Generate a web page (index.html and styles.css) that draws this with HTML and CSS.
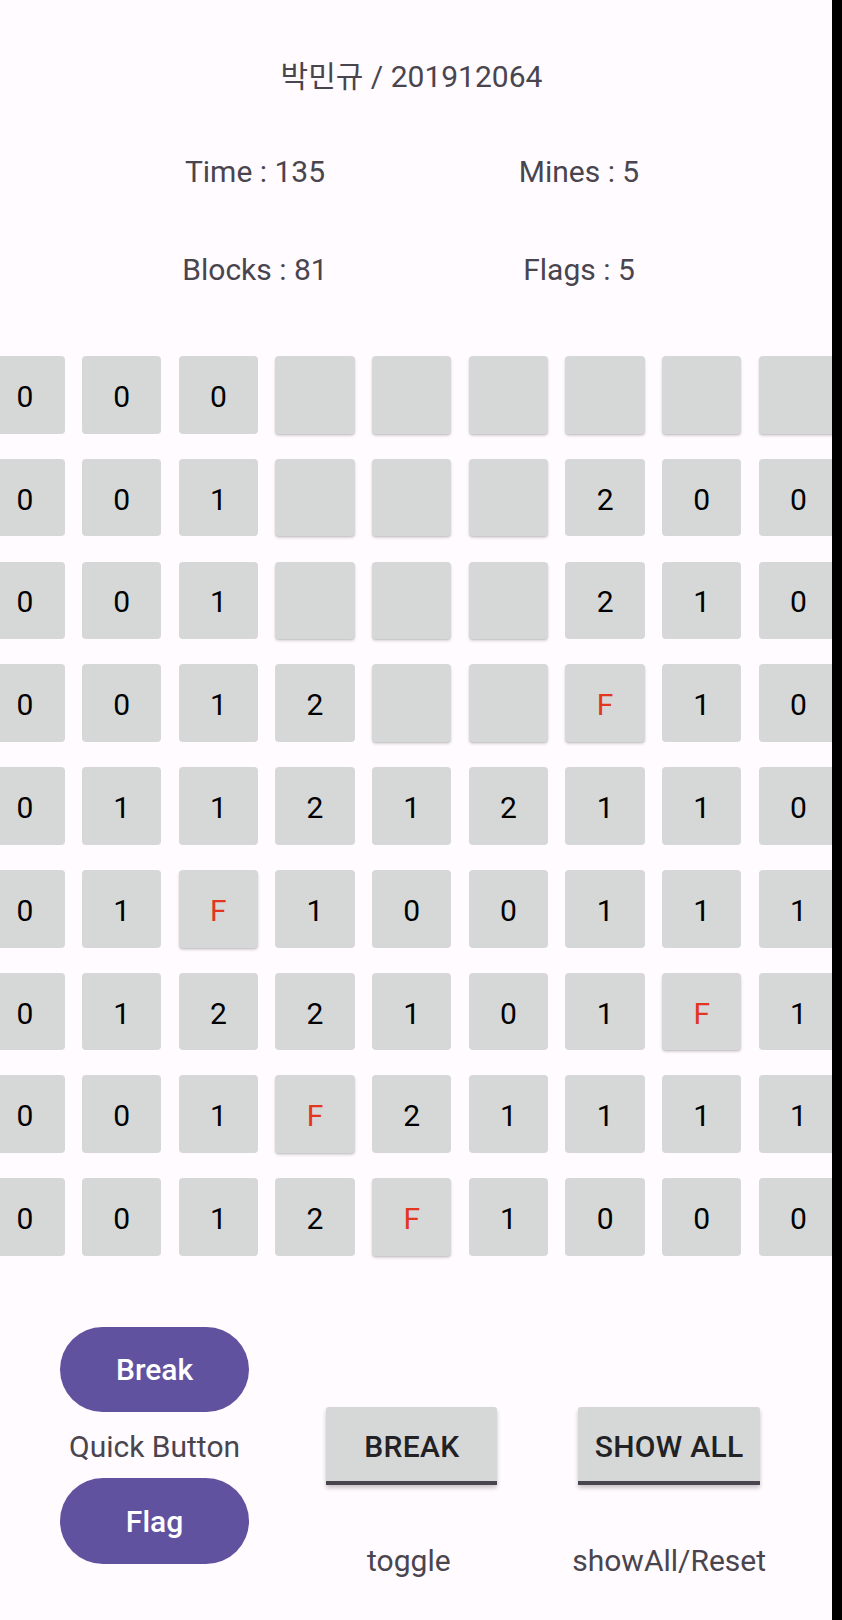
FILE: index.html
```html
<!DOCTYPE html>
<html lang="ko">
<head>
<meta charset="utf-8">
<title>Minesweeper</title>
<link rel="stylesheet" href="styles.css">
</head>
<body>
<div class="screen">
  <div class="title">박민규 / 201912064</div>

  <div class="stats">
    <div class="stat">Time : 135</div>
    <div class="stat">Mines : 5</div>
    <div class="stat">Blocks : 81</div>
    <div class="stat">Flags : 5</div>
  </div>

  <div class="board">
    <div class="tile">0</div><div class="tile">0</div><div class="tile">0</div><div class="tile closed"></div><div class="tile closed"></div><div class="tile closed"></div><div class="tile closed"></div><div class="tile closed"></div><div class="tile closed"></div>
    <div class="tile">0</div><div class="tile">0</div><div class="tile">1</div><div class="tile closed"></div><div class="tile closed"></div><div class="tile closed"></div><div class="tile">2</div><div class="tile">0</div><div class="tile">0</div>
    <div class="tile">0</div><div class="tile">0</div><div class="tile">1</div><div class="tile closed"></div><div class="tile closed"></div><div class="tile closed"></div><div class="tile">2</div><div class="tile">1</div><div class="tile">0</div>
    <div class="tile">0</div><div class="tile">0</div><div class="tile">1</div><div class="tile">2</div><div class="tile closed"></div><div class="tile closed"></div><div class="tile closed flag">F</div><div class="tile">1</div><div class="tile">0</div>
    <div class="tile">0</div><div class="tile">1</div><div class="tile">1</div><div class="tile">2</div><div class="tile">1</div><div class="tile">2</div><div class="tile">1</div><div class="tile">1</div><div class="tile">0</div>
    <div class="tile">0</div><div class="tile">1</div><div class="tile closed flag">F</div><div class="tile">1</div><div class="tile">0</div><div class="tile">0</div><div class="tile">1</div><div class="tile">1</div><div class="tile">1</div>
    <div class="tile">0</div><div class="tile">1</div><div class="tile">2</div><div class="tile">2</div><div class="tile">1</div><div class="tile">0</div><div class="tile">1</div><div class="tile closed flag">F</div><div class="tile">1</div>
    <div class="tile">0</div><div class="tile">0</div><div class="tile">1</div><div class="tile closed flag">F</div><div class="tile">2</div><div class="tile">1</div><div class="tile">1</div><div class="tile">1</div><div class="tile">1</div>
    <div class="tile">0</div><div class="tile">0</div><div class="tile">1</div><div class="tile">2</div><div class="tile closed flag">F</div><div class="tile">1</div><div class="tile">0</div><div class="tile">0</div><div class="tile">0</div>
  </div>

  <div class="controls">
    <div class="col quick">
      <div class="pill">Break</div>
      <div class="label quick-label">Quick Button</div>
      <div class="pill pill-flag">Flag</div>
    </div>
    <div class="col">
      <div class="toggle-btn btn-break">BREAK</div>
      <div class="label under toggle-label">toggle</div>
    </div>
    <div class="col">
      <div class="toggle-btn btn-show">SHOW ALL</div>
      <div class="label under">showAll/Reset</div>
    </div>
  </div>
</div>
</body>
</html>
```

FILE: styles.css
```css
html, body {
  margin: 0;
  padding: 0;
  background: #000;
}

body {
  width: 842px;
  height: 1620px;
  overflow: hidden;
  font-family: "Roboto", "Noto Sans CJK KR", sans-serif;
}

.screen {
  width: 832px;
  height: 1620px;
  background: #fffbfe;
  overflow: hidden;
}

.title {
  width: 823px;
  margin-top: 59.1px;
  text-align: center;
  font-size: 30px;
  line-height: 36px;
  color: #49454f;
}

.stats {
  display: grid;
  grid-template-columns: 324px 324px;
  grid-auto-rows: 36px;
  row-gap: 61.3px;
  margin-top: 59.4px;
  padding-left: 93px;
}

.stat {
  text-align: center;
  font-size: 30px;
  line-height: 36px;
  color: #49454f;
}

.board {
  display: grid;
  grid-template-columns: repeat(9, 79.3px);
  grid-auto-rows: 77.7px;
  column-gap: 17.4px;
  row-gap: 25.1px;
  margin-top: 68.2px;
  margin-left: -14.7px;
  width: 853px;
}

.tile {
  background: #d6d8d7;
  border-radius: 4px;
  display: flex;
  align-items: center;
  justify-content: center;
  padding-top: 3px;
  box-sizing: border-box;
  font-size: 30px;
  color: #000;
}

.tile.closed {
  box-shadow: 0 2px 3px rgba(0, 0, 0, 0.16), 0 1px 1px rgba(0, 0, 0, 0.08);
}

.tile.flag {
  color: #e2361f;
}

.controls {
  display: grid;
  grid-template-columns: repeat(3, 257.3px);
  margin-top: 70.6px;
  padding-left: 25.9px;
}

.col {
  display: flex;
  flex-direction: column;
  align-items: center;
}

.pill {
  width: 188.4px;
  height: 85.6px;
  border-radius: 43px;
  background: #6152a0;
  color: #fff;
  font-size: 30px;
  font-weight: 500;
  line-height: 36px;
  display: flex;
  align-items: center;
  justify-content: center;
  padding-top: 2px;
  box-sizing: border-box;
}

.label {
  font-size: 30px;
  line-height: 36px;
  color: #49454f;
}

.quick-label {
  margin-top: 17.2px;
}

.pill-flag {
  margin-top: 12.8px;
}

.toggle-btn {
  margin-top: 80px;
  height: 78px;
  box-sizing: border-box;
  padding-top: 22.8px;
  background: #d6d8d7;
  border-bottom: 4.7px solid #48454e;
  border-radius: 3px 3px 0 0;
  box-shadow: 0 3px 4px rgba(0, 0, 0, 0.22);
  text-align: center;
  font-size: 30px;
  font-weight: 500;
  line-height: 36px;
  letter-spacing: 0.3px;
  color: #222124;
}

.btn-break {
  width: 171px;
}

.btn-show {
  width: 182.7px;
}

.under {
  margin-top: 58.8px;
}

.toggle-label {
  margin-right: 6px;
}
```
